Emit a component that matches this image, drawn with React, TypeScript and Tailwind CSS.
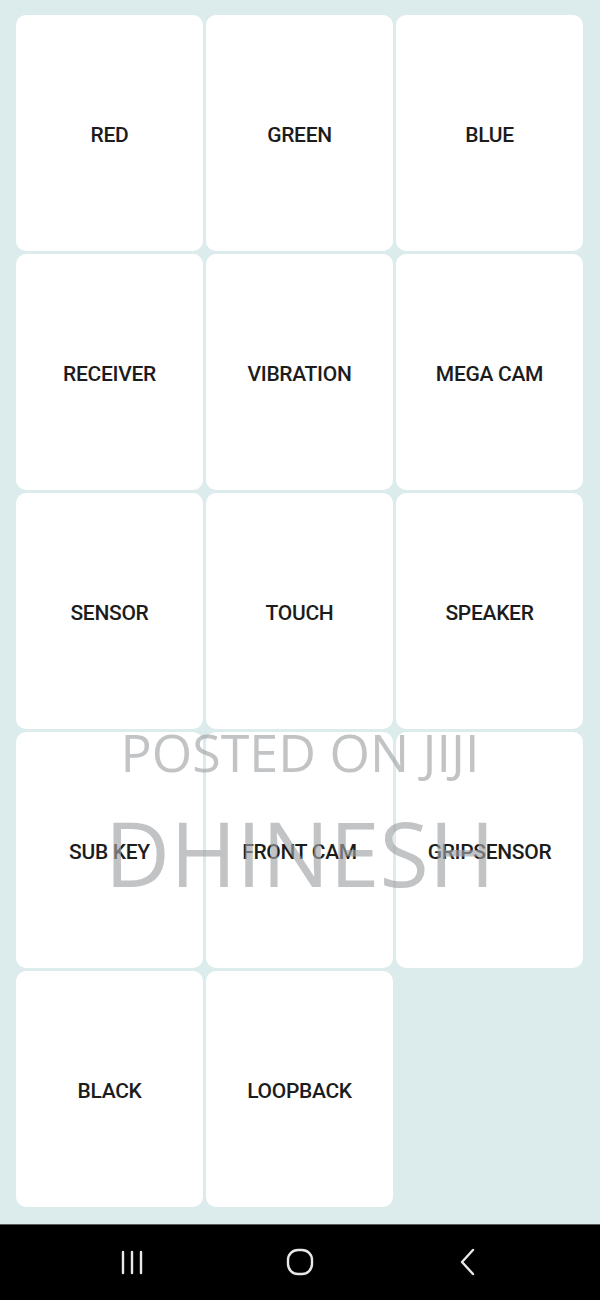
import React from 'react';

const items = [
  'RED', 'GREEN', 'BLUE',
  'RECEIVER', 'VIBRATION', 'MEGA CAM',
  'SENSOR', 'TOUCH', 'SPEAKER',
  'SUB KEY', 'FRONT CAM', 'GRIPSENSOR',
  'BLACK', 'LOOPBACK',
];

export default function App() {
  return (
    <div className="relative flex h-[1300px] w-[600px] flex-col bg-[#dcebeb] font-['Roboto',sans-serif]">
      {/* test menu grid */}
      <div className="flex-1 pl-4 pt-[15px]">
        <div className="grid grid-cols-[187px_187px_187px] auto-rows-[236px] gap-[3px]">
          {items.map((label) => (
            <button
              key={label}
              className="flex items-center justify-center rounded-[10px] bg-white pt-[5px] text-[21px] font-medium tracking-[-0.3px] text-[#1c1c1c]"
            >
              {label}
            </button>
          ))}
        </div>
      </div>

      {/* nav bar */}
      <div className="flex h-[76px] items-center justify-center border-t border-[#5a5a5a] bg-black pb-[1px]">
        <div className="flex w-[168px] justify-center">
          <svg width="24" height="25" viewBox="0 0 24 25" fill="none" stroke="#e8e8e8" strokeWidth="2.4" strokeLinecap="round">
            <path d="M3 2v21M12 2v21M21 2v21" />
          </svg>
        </div>
        <div className="flex w-[168px] justify-center">
          <svg width="28" height="28" viewBox="0 0 28 28" fill="none" stroke="#e8e8e8" strokeWidth="2.4">
            <rect x="2" y="2" width="24" height="24" rx="10" />
          </svg>
        </div>
        <div className="flex w-[168px] justify-center">
          <svg width="20" height="28" viewBox="0 0 20 28" fill="none" stroke="#e8e8e8" strokeWidth="2.4" strokeLinecap="round" strokeLinejoin="round">
            <path d="M15 2L4 14l11 12" />
          </svg>
        </div>
      </div>

      {/* watermark */}
      <div className="pointer-events-none absolute left-0 top-[721px] flex w-[600px] flex-col items-center font-['Open_Sans',sans-serif] text-[#9fa3a6]/65">
        <div className="text-[52px] font-normal leading-[62px]">POSTED ON JIJI</div>
        <div className="mt-[14px] text-[90px] font-normal leading-[110px]">DHINESH</div>
      </div>
    </div>
  );
}
